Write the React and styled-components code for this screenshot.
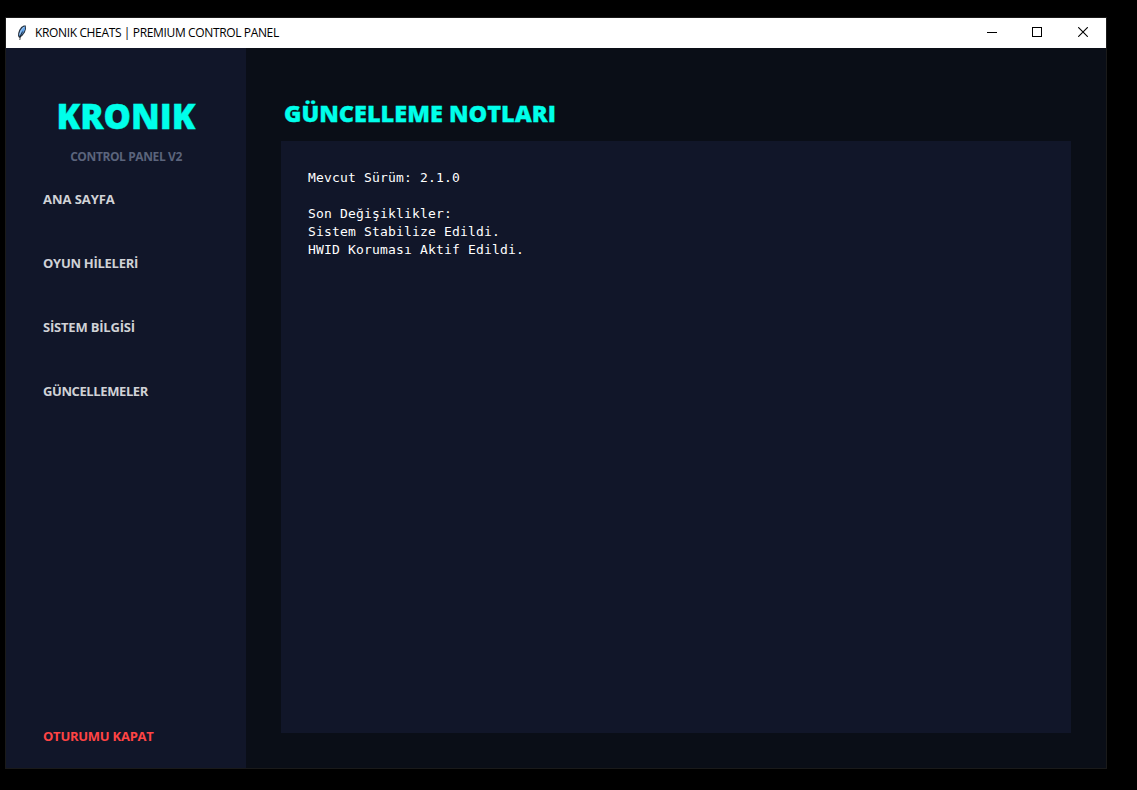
import styled, { createGlobalStyle } from 'styled-components';

const GlobalStyle = createGlobalStyle`
  body {
    margin: 0;
    background: #000;
    font-family: "Open Sans", "Noto Sans", sans-serif;
  }
  button {
    font-family: inherit;
  }
`;

const Desktop = styled.div`
  box-sizing: border-box;
  height: 790px;
  padding: 17px 0 0 5px;
  overflow: hidden;
`;

const Window = styled.div`
  width: 1100px;
  border: 1px solid #1a1a1a;
`;

const TitleBar = styled.header`
  display: flex;
  align-items: center;
  height: 30px;
  padding-left: 8px;
  background: #fff;
  color: #000;
`;

const Title = styled.span`
  flex: 1;
  margin-left: 5px;
  font-size: 12px;
  line-height: 16px;
  letter-spacing: -0.36px;
  white-space: nowrap;
`;

const WindowButton = styled.button`
  box-sizing: border-box;
  display: flex;
  align-items: center;
  justify-content: center;
  width: ${({ $width }) => $width}px;
  height: 30px;
  padding: 0 0 2px;
  border: 0;
  background: transparent;
`;

const Body = styled.div`
  display: flex;
  height: 720px;
  background: #0a0e17;
`;

const Sidebar = styled.aside`
  box-sizing: border-box;
  display: flex;
  flex-direction: column;
  width: 240px;
  padding: 44px 0 10px;
  background: #111629;
`;

const Brand = styled.div`
  color: #00ffea;
  font-size: 34.5px;
  font-weight: 800;
  line-height: 47px;
  text-align: center;
  -webkit-text-stroke: 0.4px #00ffea;
`;

const Tagline = styled.div`
  margin: 10px 0 12px;
  color: #5b647c;
  font-size: 12px;
  font-weight: 700;
  line-height: 16px;
  letter-spacing: -0.4px;
  text-align: center;
`;

const Nav = styled.nav`
  display: flex;
  flex: 1;
  flex-direction: column;
  gap: 20px;
`;

const NavButton = styled.button`
  height: 44px;
  padding: 0 0 0 37px;
  border: 0;
  background: transparent;
  color: ${({ $danger }) => ($danger ? '#ff4444' : '#d0d2d6')};
  font-size: 13px;
  font-weight: 700;
  line-height: 44px;
  letter-spacing: ${({ $spacing }) => $spacing}px;
  text-align: left;
`;

const Content = styled.main`
  box-sizing: border-box;
  display: flex;
  flex: 1;
  flex-direction: column;
  padding: 49px 35px 35px;
`;

const Heading = styled.h1`
  margin: 0 0 12px 3px;
  color: #00ffea;
  font-size: 23.5px;
  font-weight: 800;
  line-height: 32px;
  -webkit-text-stroke: 0.3px #00ffea;
`;

const Notes = styled.pre`
  flex: 1;
  margin: 0;
  padding: 28px 27px 26px;
  background: #111629;
  color: #fff;
  font-family: "DejaVu Sans Mono", "Liberation Mono", monospace;
  font-size: 13px;
  line-height: 18px;
  letter-spacing: 0.174px;
`;

const menu = [
  { label: 'ANA SAYFA', spacing: -0.05 },
  { label: 'OYUN HİLELERİ', spacing: -0.28 },
  { label: 'SİSTEM BİLGİSİ', spacing: -0.2 },
  { label: 'GÜNCELLEMELER', spacing: -0.4 },
];

const notes = `Mevcut Sürüm: 2.1.0

Son Değişiklikler:
Sistem Stabilize Edildi.
HWID Koruması Aktif Edildi.`;

const FeatherIcon = () => (
  <svg width="16" height="16" viewBox="0 0 16 16">
    <path d="M11.8 0.5H9.8L7.2 2 5.2 5 4.2 8 4 11 5.2 13 8.2 11 10.8 7.5 12 4Z" fill="#2a3644" />
    <path d="M11 1.2 8.2 2.8 6.1 6 5 10.8 6.3 10.8 9.2 8 11 4.5Z" fill="#5fa0e6" />
    <path d="M10 2 7.2 5.5 5.5 9.5" fill="none" stroke="#b5d6f5" strokeWidth="0.8" />
    <path d="M8.6 6.5 6.5 10.5 5.8 15" fill="none" stroke="#10151c" strokeWidth="0.8" />
  </svg>
);

const MinimizeIcon = () => (
  <svg width="10" height="10" viewBox="0 0 10 10" shapeRendering="crispEdges">
    <path d="M0 5.5H10" stroke="#000" />
  </svg>
);

const MaximizeIcon = () => (
  <svg width="10" height="10" viewBox="0 0 10 10" shapeRendering="crispEdges">
    <rect x="0.5" y="0.5" width="9" height="9" fill="none" stroke="#000" />
  </svg>
);

const CloseIcon = () => (
  <svg width="10" height="10" viewBox="0 0 10 10">
    <path d="M0.2 0.2 9.8 9.8M9.8 0.2 0.2 9.8" stroke="#000" strokeWidth="1.1" />
  </svg>
);

const App = () => {
  return (
    <>
      <GlobalStyle />
      <Desktop>
        <Window>
          <TitleBar>
            <FeatherIcon />
            <Title>KRONIK CHEATS | PREMIUM CONTROL PANEL</Title>
            <WindowButton aria-label="Minimize" $width={44}><MinimizeIcon /></WindowButton>
            <WindowButton aria-label="Maximize" $width={46}><MaximizeIcon /></WindowButton>
            <WindowButton aria-label="Close" $width={46}><CloseIcon /></WindowButton>
          </TitleBar>
          <Body>
            <Sidebar>
              <Brand>KRONIK</Brand>
              <Tagline>CONTROL PANEL V2</Tagline>
              <Nav>
                {menu.map(({ label, spacing }) => (
                  <NavButton key={label} $spacing={spacing}>{label}</NavButton>
                ))}
              </Nav>
              <NavButton $danger $spacing={-0.25}>OTURUMU KAPAT</NavButton>
            </Sidebar>
            <Content>
              <Heading>GÜNCELLEME NOTLARI</Heading>
              <Notes>{notes}</Notes>
            </Content>
          </Body>
        </Window>
      </Desktop>
    </>
  );
};

export default App;
